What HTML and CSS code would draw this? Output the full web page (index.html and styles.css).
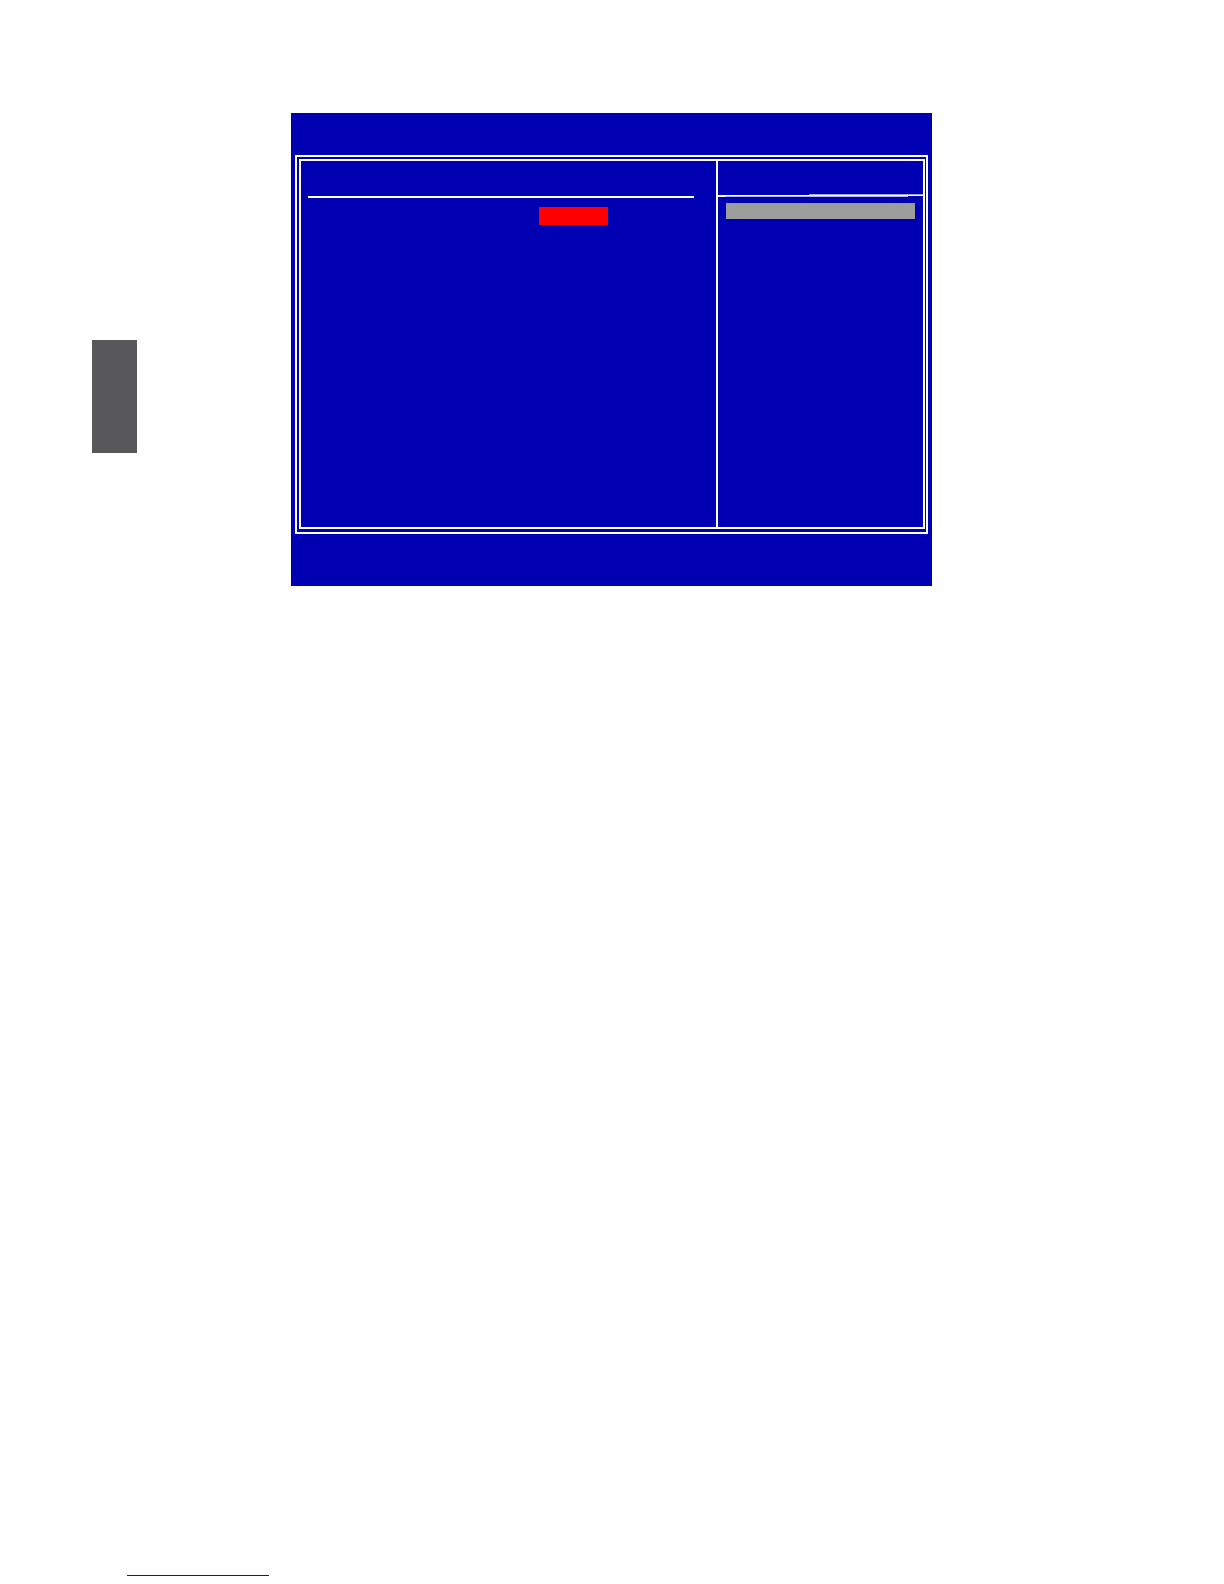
FILE: index.html
```html
<!DOCTYPE html>
<html lang="en">
<head>
    <meta charset="UTF-8">
    <meta name="viewport" content="width=device-width, initial-scale=1.0">
    <title>Setup Screen</title>
    <link rel="stylesheet" href="styles.css">
</head>
<body>
    <main class="page">
        <aside class="chapter-tab"></aside>

        <section class="screen">
            <div class="frame">
                <div class="frame-inner">
                    <div class="settings">
                        <hr class="settings-rule">
                        <div class="selected-value"></div>
                    </div>
                    <div class="help">
                        <svg class="help-rule" viewBox="0 0 205 3" preserveAspectRatio="none" aria-hidden="true">
                            <path d="M91 0H205V1H91z" fill="#9c9ce6"/>
                            <path d="M0 1H205V2H0z" fill="#fff"/>
                            <path d="M0 2H7V3H0z" fill="#fff"/>
                            <path d="M7 2H190V3H7z" fill="#b8b8ee"/>
                        </svg>
                        <div class="help-bar"></div>
                    </div>
                </div>
            </div>
        </section>
    </main>

    <footer>
        <hr class="footer-rule">
    </footer>
</body>
</html>
```

FILE: styles.css
```css
:root {
    --screen-blue: #0000b3;
    --highlight: #ff0000;
    --bar-gray: #9c9e9e;
    --tab-gray: #58585a;
    --link-blue: #14149a;
}

* {
    box-sizing: border-box;
}

body {
    display: flex;
    flex-direction: column;
    min-height: 100vh;
    margin: 0;
    background: white;
    font-family: "Liberation Sans", Arial, sans-serif;
}

hr {
    margin: 0;
    border: none;
}

.page {
    display: grid;
    grid-template-columns: 92fr 45px 154fr 641fr 292fr;
    align-items: start;
    flex: 1;
    padding-top: 113px;
}

.chapter-tab {
    grid-column: 2;
    height: 113px;
    margin-top: 227px;
    background: var(--tab-gray);
}

.screen {
    grid-column: 4;
    padding: 42px 4px 52px;
    background: var(--screen-blue);
}

/* double white border */
.frame {
    padding: 2px 1px 3px 2px;
    border: 2px solid white;
}

.frame-inner {
    display: grid;
    grid-template-columns: 417fr 205fr;
    min-height: 370px;
    border: 2px solid white;
}

.settings {
    padding: 35px 22px 0 7px;
    border-right: 2px solid white;
}

.settings-rule {
    height: 2px;
    background: white;
}

.selected-value {
    width: 69px;
    height: 18px;
    margin: 9px 86px 0 auto;
    background: var(--highlight);
}

.help {
    padding-top: 33px;
}

.help-rule {
    display: block;
    width: 100%;
    height: 3px;
}

.help-bar {
    height: 16px;
    margin: 6px 8px 0;
    background: var(--bar-gray);
}

.footer-rule {
    width: 142px;
    height: 1px;
    margin: 0 0 8px 127px;
    background: var(--link-blue);
}
```
